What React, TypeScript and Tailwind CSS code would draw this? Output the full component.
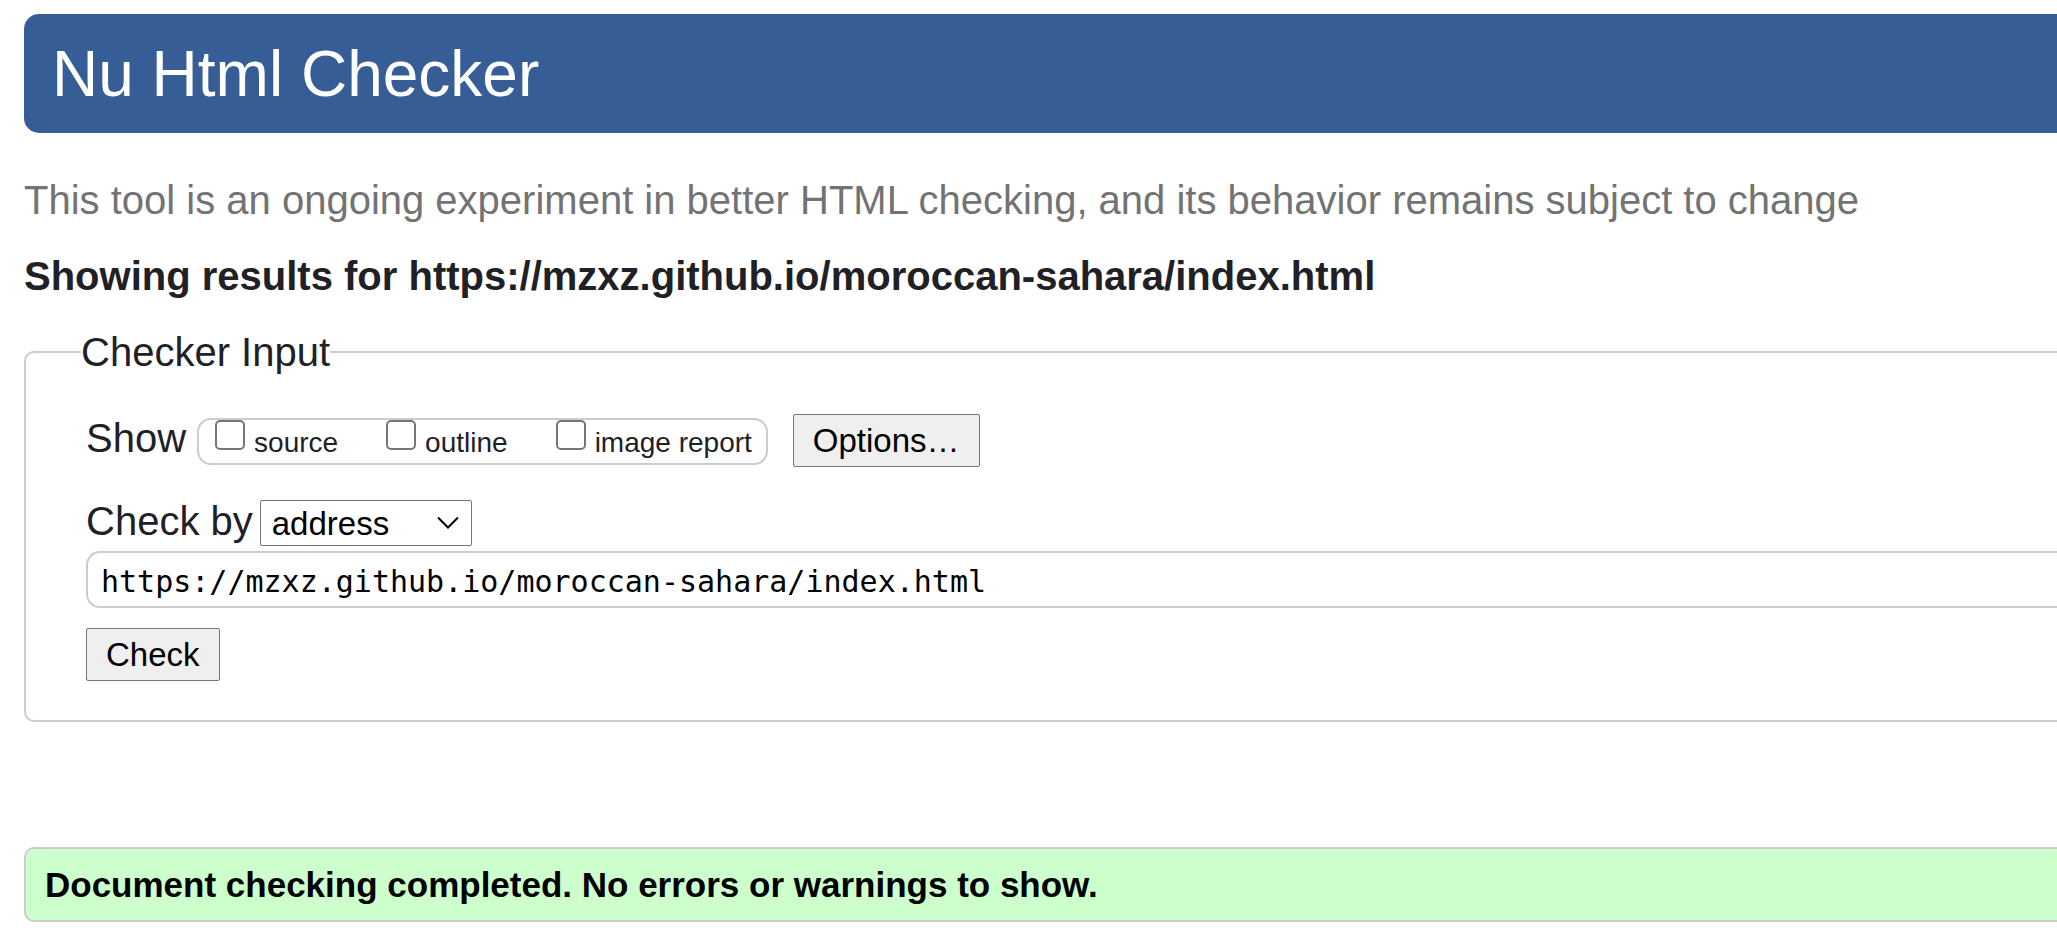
import { useState } from "react";

const reports = [
  { id: "source", label: "source" },
  { id: "outline", label: "outline" },
  { id: "image", label: "image report" },
];

const buttonClass =
  "h-[53px] rounded-[2px] border border-[#767676] bg-[#efefef] px-[19px] text-[33px] leading-[50px] text-black";

function ReportOptions() {
  return (
    <div className="mt-1 ml-[11px] flex h-[47px] shrink-0 items-start gap-12 rounded-[14px] border-2 border-[#cccccc] pr-[14px] pl-4">
      {reports.map((report) => (
        <label key={report.id} htmlFor={report.id} className="flex items-start gap-[9px] whitespace-nowrap">
          <input
            id={report.id}
            type="checkbox"
            className="h-[30px] w-[30px] appearance-none rounded-[5px] border-2 border-[#767676] bg-white checked:bg-[#365d95]"
          />
          <span className="pt-[3px] text-[28px] leading-[40px]">{report.label}</span>
        </label>
      ))}
    </div>
  );
}

function CheckerForm() {
  const [address, setAddress] = useState("https://mzxz.github.io/moroccan-sahara/index.html");

  return (
    <form onSubmit={(event) => event.preventDefault()}>
      <fieldset className="mt-7 rounded-l-[10px] border-2 border-r-0 border-[#cccccc] pb-[39px] pl-[60px]">
        <legend className="-ml-[5px] text-[40px] leading-[48px]">Checker Input</legend>

        <div className="mt-[38px] flex items-start">
          <span className="text-[40px] leading-[48px]">Show</span>
          <ReportOptions />
          <button type="button" className={`${buttonClass} ml-[25px]`}>
            Options…
          </button>
        </div>

        <div className="mt-[30px] flex items-start gap-[7px]">
          <label htmlFor="method" className="text-[40px] leading-[48px]">
            Check by
          </label>
          <div className="relative mt-[3px]">
            <select
              id="method"
              className="block h-[46px] w-[212px] appearance-none rounded-[2px] border border-[#767676] bg-white pt-[2px] pl-[11px] text-[33px] leading-[40px] text-black"
            >
              <option>address</option>
              <option>file upload</option>
              <option>text input</option>
            </select>
            <svg
              viewBox="0 0 22 14"
              className="pointer-events-none absolute top-4 right-[13px] h-[14px] w-[22px]"
              fill="none"
              stroke="black"
              strokeWidth="2"
              aria-hidden="true"
            >
              <path d="M1 1.5 L11 11.5 L21 1.5" />
            </svg>
          </div>
        </div>

        <input
          type="text"
          aria-label="Address"
          value={address}
          onChange={(event) => setAddress(event.target.value)}
          className="mt-[5px] block h-[57px] w-full rounded-l-[14px] border-2 border-r-0 border-[#cccccc] bg-white px-[13px] pt-[3px] font-['DejaVu_Sans_Mono',monospace] text-[30px] text-black"
        />

        <button type="submit" className={`${buttonClass} mt-5 block`}>
          Check
        </button>
      </fieldset>
    </form>
  );
}

export default function App() {
  return (
    <div className="min-h-screen bg-white pt-[14px] pl-6 font-['Liberation_Sans',Arial,sans-serif] text-[#1f2126]">
      <header className="flex h-[119px] items-center rounded-l-[15px] bg-[#365d95] pl-7">
        <h1 className="text-[64px] leading-[72px] text-white">Nu Html Checker</h1>
      </header>

      <main>
        <p className="mt-[43px] text-[40px] leading-[48px] text-[#737373]">
          This tool is an ongoing experiment in better HTML checking, and its behavior remains subject to change
        </p>
        <h2 className="mt-7 text-[40px] leading-[48px] font-bold">
          Showing results for https://mzxz.github.io/moroccan-sahara/index.html
        </h2>

        <CheckerForm />

        <p className="mt-[125px] flex h-[75px] items-center rounded-l-[10px] border-2 border-r-0 border-[#cccccc] bg-[#ccffcc] pt-[2px] pl-[19px] text-[35px] font-bold text-black">
          Document checking completed. No errors or warnings to show.
        </p>
      </main>
    </div>
  );
}
